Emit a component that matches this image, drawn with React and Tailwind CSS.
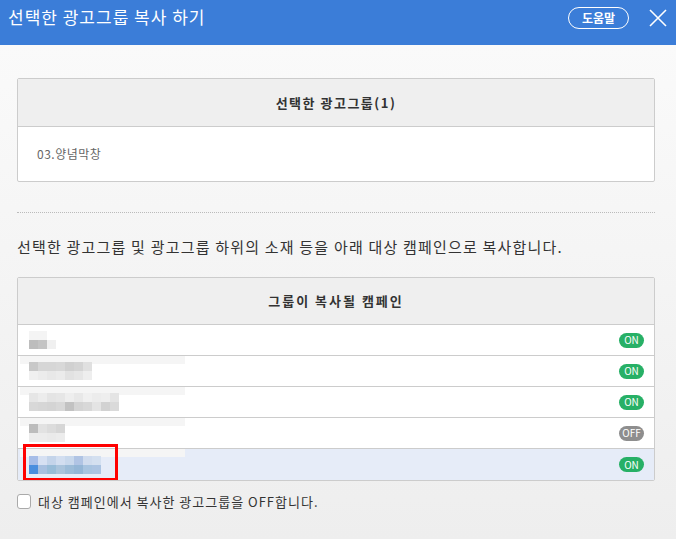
import React from "react";

const font = { fontFamily: '"Noto Sans CJK KR", "Noto Sans", sans-serif' };

const campaigns = [
  { on: true, cells: [[["#f4f4f4", "#f4f4f4", "#fff"]], [["#bdbdbd", "#c4c4c4", "#f0f0f0"]]] },
  {
    on: true,
    cells: [
      [["#c8c8c8", "#d6d6d6", "#d6d6d6", "#d8d8d8", "#d0d0d0", "#d4d4d4", "#e0e0e0"]],
      [["#f0f0f0", "#ececec", "#e8e8e8", "#ebebeb", "#e2e2e2", "#e6e6e6", "#eeeeee"]],
    ],
  },
  {
    on: true,
    cells: [
      [["#e6e6e6", "#ececec", "#e4e4e4", "#e6e6e6", "#eeeeee", "#e8e8e8", "#f0f0f0", "#ececec", "#eeeeee", "#e4e4e4"]],
      [["#d8d8d8", "#d6d6d6", "#d4d4d4", "#d8d8d8", "#c2c2c2", "#d4d4d4", "#d8d8d8", "#e4e4e4", "#d2d2d2", "#dadada"]],
    ],
  },
  {
    on: false,
    cells: [[["#bcbcbc", "#e2e2e2", "#dcdcdc", "#d6d6d6"]], [["#ececec", "#ececec", "#eaeaea", "#ececec"]]],
  },
  {
    on: true,
    selected: true,
    cells: [
      [["#a6bde8", "#d6e0f2", "#c4d4ea", "#d2def0", "#c8d8ec", "#b0c4e4", "#d0dcee", "#d4e0f0"]],
      [["#4a8ede", "#a8c0e0", "#98bcd8", "#aac4dc", "#9cbcd8", "#94b6d6", "#a8c4e0", "#acc4e2"]],
    ],
  },
];

const Pixels = ({ cells }) => (
  <div className="flex flex-col">
    {cells.map((row, i) => (
      <div key={i} className="flex">
        {row[0].map((c, j) => (
          <div key={j} className="w-[9px] h-[9px]" style={{ backgroundColor: c }} />
        ))}
      </div>
    ))}
  </div>
);

const Badge = ({ on }) => (
  <span
    className={`inline-flex items-center justify-center w-[25px] h-[15px] rounded-full text-[10px] leading-none text-white ${
      on ? "bg-[#27b066]" : "bg-[#8e8e8e]"
    }`}
  >
    {on ? "ON" : "OFF"}
  </span>
);

export default function App() {
  return (
    <div className="w-[676px] h-[539px] overflow-hidden flex flex-col" style={font}>
      <div className="h-[45px] bg-[#3b7dd8] flex items-start justify-between pl-[8px] pr-[8px] pt-[5px] shrink-0">
        <h1 className="text-[17px] text-white font-normal leading-[24px] tracking-[1px]">선택한 광고그룹 복사 하기</h1>
        <div className="flex items-center gap-[19px] pt-[2px]">
          <button className="h-[22px] w-[61px] rounded-full border-[1.5px] border-white text-white text-[12px] font-bold leading-none">
            도움말
          </button>
          <svg width="20" height="20" viewBox="0 0 20 20">
            <path d="M2 2 L18 18 M18 2 L2 18" stroke="#fff" strokeWidth="1.6" fill="none" />
          </svg>
        </div>
      </div>

      <div className="flex-1 bg-gradient-to-b from-[#fafafa] to-[#eeeeee] pl-[17px] pr-[21px] pt-[33px]">
        <div className="border border-[#cccccc] rounded-[2px] bg-white overflow-hidden">
          <div className="h-[48px] bg-[#efefef] border-b border-[#cccccc] flex items-center justify-center text-[13px] font-bold text-[#333] tracking-[1.5px]">
            선택한 광고그룹(1)
          </div>
          <div className="h-[54px] flex items-center px-[19px] text-[12px] text-[#666] tracking-[0.5px]">03.양념막창</div>
        </div>

        <div className="mt-[30px] border-t border-dotted border-[#bbbbbb]" />

        <p className="mt-[23px] text-[15px] text-[#333] leading-[22px] tracking-[1.2px] whitespace-nowrap">
          선택한 광고그룹 및 광고그룹 하위의 소재 등을 아래 대상 캠페인으로 복사합니다.
        </p>

        <div className="mt-[19px] border border-[#cccccc] rounded-[2px] bg-white overflow-hidden">
          <div className="h-[47px] bg-[#efefef] border-b border-[#cccccc] flex items-center justify-center text-[13px] font-bold text-[#333] tracking-[2px]">
            그룹이 복사될 캠페인
          </div>
          {campaigns.map((c, i) => (
            <div
              key={i}
              className={`relative h-[31px] flex items-center justify-between pl-[11px] pr-[10px] ${
                i < campaigns.length - 1 ? "border-b border-[#cccccc]" : ""
              } ${c.selected ? "bg-[#e6ecf8]" : "bg-white"}`}
            >
              {i > 0 && <div className="absolute left-[2px] top-0 w-[165px] h-[8px] bg-[#f5f5f5]" />}
              <div className="relative">
                <Pixels cells={c.cells} />
              </div>
              <Badge on={c.on} />
              {c.selected && (
                <div className="absolute left-[5px] top-[-5px] w-[95px] h-[37px] border-[3px] border-[#ff0000]" />
              )}
            </div>
          ))}
        </div>

        <label className="mt-[11px] flex items-center gap-[7px] text-[13px] text-[#333] tracking-[1px]">
          <span className="w-[14px] h-[15px] rounded-[3px] border border-[#aaaaaa] bg-white" />
          대상 캠페인에서 복사한 광고그룹을 OFF합니다.
        </label>
      </div>
    </div>
  );
}
